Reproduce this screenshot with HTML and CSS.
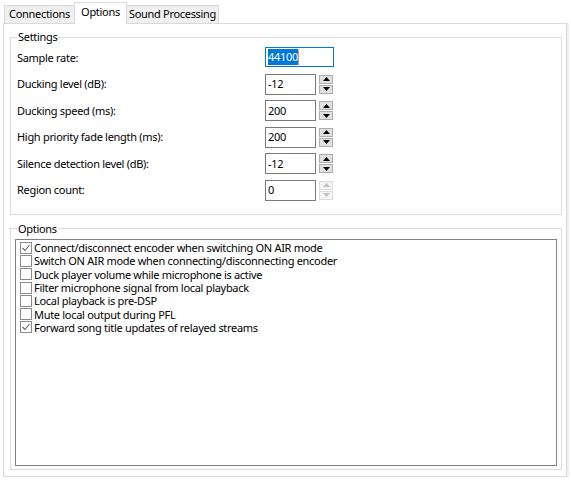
FILE: index.html
```html
<!DOCTYPE html>
<html>
<head>
<meta charset="utf-8">
<link rel="stylesheet" href="styles.css">
</head>
<body>
<div class="window">
  <div class="tabs">
    <div class="tab tab-connections">Connections</div>
    <div class="tab tab-options active">Options</div>
    <div class="tab tab-sound">Sound Processing</div>
  </div>
  <div class="panel">
    <fieldset class="group settings">
      <legend>Settings</legend>
      <div class="form">
        <div class="label">Sample rate:</div>
        <div class="field"><div class="textbox focus"><span class="sel">44100</span><span class="caret"></span></div></div>

        <div class="label">Ducking level (dB):</div>
        <div class="field"><div class="textbox">-12</div><div class="spin"><div class="btn up"><svg width="7" height="4" viewBox="0 0 7 4"><polygon points="0,4 7,4 3.5,0"/></svg></div><div class="btn down"><svg width="7" height="4" viewBox="0 0 7 4"><polygon points="0,0 7,0 3.5,4"/></svg></div></div></div>

        <div class="label">Ducking speed (ms):</div>
        <div class="field"><div class="textbox">200</div><div class="spin"><div class="btn up"><svg width="7" height="4" viewBox="0 0 7 4"><polygon points="0,4 7,4 3.5,0"/></svg></div><div class="btn down"><svg width="7" height="4" viewBox="0 0 7 4"><polygon points="0,0 7,0 3.5,4"/></svg></div></div></div>

        <div class="label">High priority fade length (ms):</div>
        <div class="field"><div class="textbox">200</div><div class="spin"><div class="btn up"><svg width="7" height="4" viewBox="0 0 7 4"><polygon points="0,4 7,4 3.5,0"/></svg></div><div class="btn down"><svg width="7" height="4" viewBox="0 0 7 4"><polygon points="0,0 7,0 3.5,4"/></svg></div></div></div>

        <div class="label">Silence detection level (dB):</div>
        <div class="field"><div class="textbox">-12</div><div class="spin"><div class="btn up"><svg width="7" height="4" viewBox="0 0 7 4"><polygon points="0,4 7,4 3.5,0"/></svg></div><div class="btn down"><svg width="7" height="4" viewBox="0 0 7 4"><polygon points="0,0 7,0 3.5,4"/></svg></div></div></div>

        <div class="label">Region count:</div>
        <div class="field"><div class="textbox">0</div><div class="spin disabled"><div class="btn up"><svg width="7" height="4" viewBox="0 0 7 4"><polygon points="0,4 7,4 3.5,0"/></svg></div><div class="btn down"><svg width="7" height="4" viewBox="0 0 7 4"><polygon points="0,0 7,0 3.5,4"/></svg></div></div></div>
      </div>
    </fieldset>

    <fieldset class="group options">
      <legend>Options</legend>
      <div class="list">
        <div class="item"><span class="cb checked"><svg width="10" height="10" viewBox="0 0 10 10"><polyline points="1.5,5 4,7.5 8.5,2" /></svg></span>Connect/disconnect encoder when switching ON AIR mode</div>
        <div class="item"><span class="cb"></span>Switch ON AIR mode when connecting/disconnecting encoder</div>
        <div class="item"><span class="cb"></span>Duck player volume while microphone is active</div>
        <div class="item"><span class="cb"></span>Filter microphone signal from local playback</div>
        <div class="item"><span class="cb"></span>Local playback is pre-DSP</div>
        <div class="item"><span class="cb"></span>Mute local output during PFL</div>
        <div class="item"><span class="cb checked"><svg width="10" height="10" viewBox="0 0 10 10"><polyline points="1.5,5 4,7.5 8.5,2" /></svg></span>Forward song title updates of relayed streams</div>
      </div>
    </fieldset>
  </div>
</div>
</body>
</html>
```

FILE: styles.css
```css
html, body {
  margin: 0;
  padding: 0;
  background: #ffffff;
}

body {
  font-family: "Noto Sans", "Segoe UI", "DejaVu Sans", sans-serif;
  font-size: 11px;
  letter-spacing: -0.3px;
  color: #000000;
}

.window {
  box-sizing: border-box;
  width: 571px;
  height: 481px;
  padding: 2px 4px 4px 3px;
  display: flex;
  flex-direction: column;
}

.tabs {
  display: flex;
  align-items: flex-end;
  height: 21px;
  padding-left: 1px;
}

.tab {
  box-sizing: border-box;
  height: 18px;
  border: 1px solid #d9d9d9;
  border-bottom: none;
  background: #f0f0f0;
  display: flex;
  align-items: center;
  justify-content: center;
  line-height: 14px;
  padding-bottom: 1px;
  white-space: nowrap;
}

.tab-connections { width: 70px; border-right: none; }
.tab-options { width: 53px; }
.tab-sound { width: 92px; border-left: none; }

.tab.active {
  height: 22px;
  margin-bottom: -1px;
  background: #ffffff;
  position: relative;
  z-index: 1;
  padding-bottom: 4px;
}

.panel {
  flex: 1;
  min-height: 0;
  border: 1px solid #d9d9d9;
  background: #ffffff;
  padding: 6px 4px 6px 6px;
  display: flex;
  flex-direction: column;
  box-shadow: 2px 0 0 #f0f0f0;
}

.group {
  margin: 0;
  border: 1px solid #dcdcdc;
  min-width: 0;
}

.group legend {
  padding: 0 1px;
  line-height: 14px;
}

.settings {
  padding: 0 6px 13px 6px;
}

.form {
  margin-top: 3px;
  display: grid;
  grid-template-columns: 248px 1fr;
  grid-auto-rows: 21px;
  row-gap: 5.6px;
}

.label {
  display: flex;
  align-items: center;
  line-height: 14px;
}

.field {
  display: flex;
  align-items: flex-start;
}

.textbox {
  box-sizing: border-box;
  width: 51px;
  height: 21px;
  border: 1px solid #7a7a7a;
  background: #ffffff;
  padding: 0 2px;
  display: flex;
  align-items: center;
  line-height: 14px;
}

.textbox.focus {
  width: 69px;
  height: 20px;
  border-color: #0078d7;
}

.sel {
  background: #0078d7;
  color: #ffffff;
  padding: 1px 0;
}

.caret {
  width: 1px;
  height: 15px;
  background: #f09030;
}

.spin {
  margin-left: 3px;
  display: flex;
  flex-direction: column;
  gap: 1px;
  padding-top: 1px;
}

.btn {
  box-sizing: border-box;
  width: 14px;
  height: 9px;
  border: 1px solid #adadad;
  background: #e1e1e1;
  display: flex;
  align-items: center;
  justify-content: center;
}

.btn svg polygon {
  fill: #000000;
}

.spin.disabled .btn {
  border-color: #dcdcdc;
  background: #f4f4f4;
}

.spin.disabled .btn svg polygon {
  fill: #bfbfbf;
}

.options {
  flex: 1;
  margin-top: 7px;
  padding: 0 4px 3px 4px;
  display: flex;
  flex-direction: column;
}

.options legend {
  margin-left: 2px;
}

.list {
  flex: 1;
  margin-top: 3px;
  border: 1px solid #828282;
  background: #ffffff;
  padding: 1px 0 0 4px;
}

.item {
  height: 13.3px;
  display: flex;
  align-items: center;
  line-height: 13px;
  white-space: nowrap;
}

.cb {
  box-sizing: border-box;
  width: 12px;
  height: 12px;
  border: 1px solid #8a8a8a;
  background: #ffffff;
  margin-right: 2px;
  display: flex;
  align-items: center;
  justify-content: center;
  flex: none;
}

.cb svg polyline {
  fill: none;
  stroke: #666666;
  stroke-width: 1.1;
}
```
